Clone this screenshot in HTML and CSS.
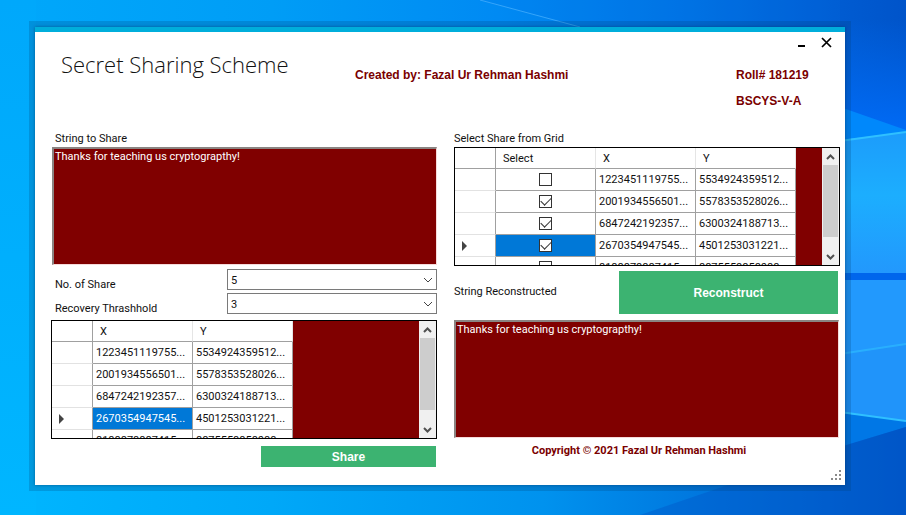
FILE: index.html
```html
<!DOCTYPE html>
<html lang="en">
<head>
<meta charset="utf-8">
<title>Secret Sharing Scheme</title>
<link rel="stylesheet" href="styles.css">
</head>
<body>
<svg class="wallpaper" viewBox="0 0 906 515" preserveAspectRatio="none" aria-hidden="true">
  <defs>
    <linearGradient id="top" x1="0" y1="0" x2="1" y2="0">
      <stop offset="0" stop-color="#00a8fb"/><stop offset=".3" stop-color="#009df6"/><stop offset=".55" stop-color="#008af3"/><stop offset=".75" stop-color="#0074e4"/><stop offset=".92" stop-color="#005cd2"/><stop offset="1" stop-color="#0054ca"/>
    </linearGradient>
    <linearGradient id="bottom" x1="0" y1="0" x2="1" y2="0">
      <stop offset="0" stop-color="#00b6ff"/><stop offset=".3" stop-color="#00a8f8"/><stop offset=".6" stop-color="#0092ee"/><stop offset=".8" stop-color="#0073dc"/><stop offset="1" stop-color="#0054c6"/>
    </linearGradient>
    <linearGradient id="left" x1="0" y1="0" x2="0" y2="1">
      <stop offset="0" stop-color="#00a8fb"/><stop offset="1" stop-color="#00b6ff"/>
    </linearGradient>
    <linearGradient id="deep" x1="0" y1="0" x2="0" y2="1">
      <stop offset="0" stop-color="#006cf8" stop-opacity="0"/><stop offset="1" stop-color="#006cf8"/>
    </linearGradient>
    <linearGradient id="pane" x1="0" y1="0" x2="0" y2="1">
      <stop offset="0" stop-color="#1c9cfb"/><stop offset=".45" stop-color="#1caefe"/><stop offset="1" stop-color="#2298fd"/>
    </linearGradient>
  </defs>
  <rect width="906" height="260" fill="url(#top)"/>
  <rect y="255" width="906" height="260" fill="url(#bottom)"/>
  <rect width="36" height="515" fill="url(#left)"/>
  <path d="M480 0L580 27H840V0Z" fill="#0070e8" opacity=".15"/>
  <path d="M480 0L580 27" stroke="#35a5fa" stroke-width="1"/>
  <rect x="840" y="20" width="66" height="120" fill="url(#deep)"/>
  <path d="M840 107L906 130V140H840Z" fill="#0088fb"/>
  <path d="M840 140L906 132V273H840Z" fill="url(#pane)"/>
  <rect x="840" y="273" width="66" height="7" fill="#0066ec"/>
  <path d="M840 280H906V421L840 413Z" fill="#2299fd"/>
  <path d="M840 354L906 344V421L840 413Z" fill="#2094fa"/>
  <path d="M840 413L906 421V427L840 447Z" fill="#0077e6"/>
  <path d="M840 447L906 427V515H640Z" fill="#0058c9" opacity=".45"/>
  <g fill="none" stroke="#2fc0ff" stroke-width="2">
    <path d="M840 141L906 132"/><path d="M840 354L906 344" opacity=".6"/><path d="M840 412L906 421"/>
  </g>
</svg>
<main class="window">
  <header class="head">
    <h1 class="title">Secret Sharing Scheme</h1>
    <p class="author">Created by: Fazal Ur Rehman Hashmi</p>
    <div class="side">
      <div class="controls">
        <button type="button" aria-label="Minimize"><svg width="12" height="12" viewBox="0 0 12 12"><path d="M3 9H10" stroke="#000" stroke-width="2"/></svg></button>
        <button type="button" aria-label="Close"><svg width="12" height="12" viewBox="0 0 12 12"><path d="M2 1L11 10M11 1L2 10" stroke="#000" stroke-width="1.7"/></svg></button>
      </div>
      <p>Roll# 181219</p>
      <p>BSCYS-V-A</p>
    </div>
  </header>
  <div class="columns">
    <section class="column">
      <label class="caption" for="secret">String to Share</label>
      <textarea id="secret" class="box" spellcheck="false">Thanks for teaching us cryptograpthy!</textarea>
      <div class="options">
        <label for="count">No. of Share</label>
        <div class="pick"><select id="count"><option>5</option></select><svg width="10" height="6" viewBox="0 0 10 6"><path d="M1 1L5 5L9 1"/></svg></div>
        <label for="threshold">Recovery Thrashhold</label>
        <div class="pick"><select id="threshold"><option>3</option></select><svg width="10" height="6" viewBox="0 0 10 6"><path d="M1 1L5 5L9 1"/></svg></div>
      </div>
      <div class="grid">
        <div class="view">
          <table>
            <thead><tr><th class="mark"></th><th>X</th><th>Y</th></tr></thead>
            <tbody>
              <tr><th class="mark"></th><td>1223451119755...</td><td>5534924359512...</td></tr>
              <tr><th class="mark"></th><td>2001934556501...</td><td>5578353528026...</td></tr>
              <tr><th class="mark"></th><td>6847242192357...</td><td>6300324188713...</td></tr>
              <tr><th class="mark"><span class="current"></span></th><td class="active">2670354947545...</td><td>4501253031221...</td></tr>
              <tr><th class="mark"></th><td>8188878887415...</td><td>8875558858088...</td></tr>
            </tbody>
          </table>
        </div>
        <div class="scroll">
          <button type="button" aria-label="Scroll up"><svg width="9" height="6" viewBox="0 0 9 6"><path d="M1 5L4.500 1.500L8 5"/></svg></button>
          <div class="track"><div class="thumb"></div></div>
          <button type="button" aria-label="Scroll down"><svg width="9" height="6" viewBox="0 0 9 6"><path d="M1 1L4.500 4.500L8 1"/></svg></button>
        </div>
      </div>
      <button type="button" class="action share">Share</button>
    </section>
    <section class="column">
      <p class="caption">Select Share from Grid</p>
      <div class="grid">
        <div class="view">
          <table>
            <thead><tr><th class="mark"></th><th>Select</th><th>X</th><th>Y</th></tr></thead>
            <tbody>
              <tr><th class="mark"></th><td class="tick"><input type="checkbox" aria-label="Share 1"></td><td>1223451119755...</td><td>5534924359512...</td></tr>
              <tr><th class="mark"></th><td class="tick"><input type="checkbox" aria-label="Share 2" checked></td><td>2001934556501...</td><td>5578353528026...</td></tr>
              <tr><th class="mark"></th><td class="tick"><input type="checkbox" aria-label="Share 3" checked></td><td>6847242192357...</td><td>6300324188713...</td></tr>
              <tr><th class="mark"><span class="current"></span></th><td class="tick active"><input type="checkbox" aria-label="Share 4" checked></td><td>2670354947545...</td><td>4501253031221...</td></tr>
              <tr><th class="mark"></th><td class="tick"><input type="checkbox" aria-label="Share 5"></td><td>8188878887415...</td><td>8875558858088...</td></tr>
            </tbody>
          </table>
        </div>
        <div class="scroll">
          <button type="button" aria-label="Scroll up"><svg width="9" height="6" viewBox="0 0 9 6"><path d="M1 5L4.500 1.500L8 5"/></svg></button>
          <div class="track"><div class="thumb"></div></div>
          <button type="button" aria-label="Scroll down"><svg width="9" height="6" viewBox="0 0 9 6"><path d="M1 1L4.500 4.500L8 1"/></svg></button>
        </div>
      </div>
      <div class="rebuild">
        <label for="result">String Reconstructed</label>
        <button type="button" class="action">Reconstruct</button>
      </div>
      <textarea id="result" class="box" spellcheck="false">Thanks for teaching us cryptograpthy!</textarea>
      <p class="copyright">Copyright © 2021 Fazal Ur Rehman Hashmi</p>
    </section>
  </div>
  <svg class="grip" width="10" height="10" viewBox="0 0 10 10" fill="#8a8a8a" aria-hidden="true"><path d="M8 0h2v2h-2zM4 4h2v2h-2zM8 4h2v2h-2zM0 8h2v2h-2zM4 8h2v2h-2zM8 8h2v2h-2z"/></svg>
</main>
</body>
</html>
```
FILE: styles.css
```css
* {
  box-sizing: border-box;
}

body {
  margin: 0;
  padding: 27px 61px 30px 35px;
  min-height: 100vh;
  display: flex;
  position: relative;
  font: 11px/18px Roboto, sans-serif;
  color: #111;
}

p,
h1 {
  margin: 0;
}

button,
select,
textarea,
input {
  font: inherit;
  margin: 0;
  padding: 0;
  border: 0;
  border-radius: 0;
  outline: 0;
}

.wallpaper {
  position: absolute;
  inset: 0;
  width: 100%;
  height: 100%;
}

.window {
  position: relative;
  flex: 1;
  min-width: 0;
  background: #fff;
  border-top: 5px solid #00aedb;
  box-shadow: 0 0 0 6px rgba(0, 60, 110, .22), 0 0 3px rgba(0, 40, 80, .5);
  padding: 0 5px 4px 16px;
}

.head {
  display: flex;
  height: 98px;
  color: #7a0000;
  font: bold 12px/26px "Liberation Sans", sans-serif;
}

.title {
  width: 304px;
  padding: 15px 0 0 10px;
  font: 300 22px/34px "Open Sans", sans-serif;
  color: #111;
}

.author {
  flex: 1;
  padding-top: 30px;
}

.side {
  width: 104px;
}

.controls {
  display: flex;
  justify-content: flex-end;
  gap: 13px;
  height: 30px;
  padding: 5px 8px 0 0;
}

.controls button {
  width: 12px;
  height: 12px;
  background: none;
}

.controls svg,
.scroll svg {
  display: block;
  fill: none;
}

.columns {
  display: grid;
  grid-template-columns: 1fr 1fr;
  gap: 17px;
}

.column {
  display: flex;
  flex-direction: column;
  min-width: 0;
}

.caption {
  height: 17px;
}

.column:first-child .caption {
  padding-left: 4px;
}

.box {
  height: 118px;
  margin-right: 1px;
  padding: 0 1px;
  border: solid;
  border-width: 2px 1px 1px 2px;
  border-color: #8a8482 #f6dada #f6dada #8a8482;
  background: #800000;
  color: #fff;
  line-height: 16px;
  resize: none;
}

.column:first-child .box {
  margin: 0 0 0 1px;
}

.options {
  display: grid;
  grid-template-columns: 176px 1fr;
  row-gap: 3px;
  padding: 4px 0 6px;
  line-height: 21px;
}

.options label {
  padding: 5px 0 0 4px;
  height: 21px;
}

.pick {
  position: relative;
}

.pick select {
  display: block;
  appearance: none;
  width: 100%;
  height: 21px;
  padding: 0 3px 2px;
  border: 1px solid #7a7a7a;
  background: #fff;
  color: #111;
}

.pick svg {
  position: absolute;
  right: 4px;
  top: 8px;
  fill: none;
  stroke: #444;
  pointer-events: none;
}

.grid {
  display: flex;
  height: 119px;
  border: 1px solid #000;
  background: #800000;
}

.view {
  flex: 1;
  min-width: 0;
  overflow: hidden;
}

table {
  border-collapse: separate;
  border-spacing: 0;
  background: #fff;
}

th,
td {
  width: 100px;
  min-width: 100px;
  height: 22px;
  padding: 0 0 0 3px;
  border: solid #a0a0a0;
  border-width: 0 1px 1px 0;
  font-weight: normal;
  text-align: left;
  white-space: nowrap;
}

thead th {
  height: 21px;
  padding: 2px 0 0 7px;
  border-right-color: #e5e5e5;
}

.mark,
thead .mark {
  width: 41px;
  min-width: 41px;
  padding: 0 0 0 7px;
  border-right-color: #a0a0a0;
}

tbody .mark {
  border-bottom-color: #e2e2e2;
}

.current {
  display: block;
  width: 5px;
  border: solid transparent;
  border-width: 5px 0 5px 5px;
  border-left-color: #444;
}

.active {
  background: #0078d7;
  color: #fff;
}

.tick {
  padding: 0;
  text-align: center;
}

.tick input {
  appearance: none;
  display: block;
  width: 13px;
  height: 13px;
  margin: 0 auto;
  border: 1px solid #333;
  background: #fff;
}

.tick input:checked::before {
  content: "";
  display: block;
  width: 9px;
  height: 5px;
  margin: 1px;
  border: solid #333;
  border-width: 0 0 1px 1px;
  transform: rotate(-45deg);
}

.scroll {
  display: flex;
  flex-direction: column;
  width: 17px;
  background: #f0f0f0;
}

.scroll button {
  display: grid;
  place-items: center;
  height: 17px;
  background: none;
}

.scroll path {
  stroke: #505050;
  stroke-width: 2;
}

.track {
  flex: 1;
  padding: 0 1px;
}

.thumb {
  height: 87%;
  background: #cdcdcd;
}

.action {
  background: #3cb371;
  color: #fff;
  font: bold 12px/16px "Liberation Sans", sans-serif;
}

.share {
  align-self: flex-end;
  width: 175px;
  height: 21px;
  margin: 7px 1px 0 0;
}

.rebuild {
  display: flex;
  padding: 5px 2px 6px 0;
}

.rebuild label {
  flex: 1;
  padding-top: 12px;
}

.rebuild .action {
  width: 219px;
  height: 43px;
}

.copyright {
  margin-top: 5px;
  padding-right: 16px;
  text-align: center;
  color: #7a0000;
  font: bold 11px/16px Roboto, sans-serif;
}

.grip {
  position: absolute;
  right: 4px;
  bottom: 5px;
}
```
